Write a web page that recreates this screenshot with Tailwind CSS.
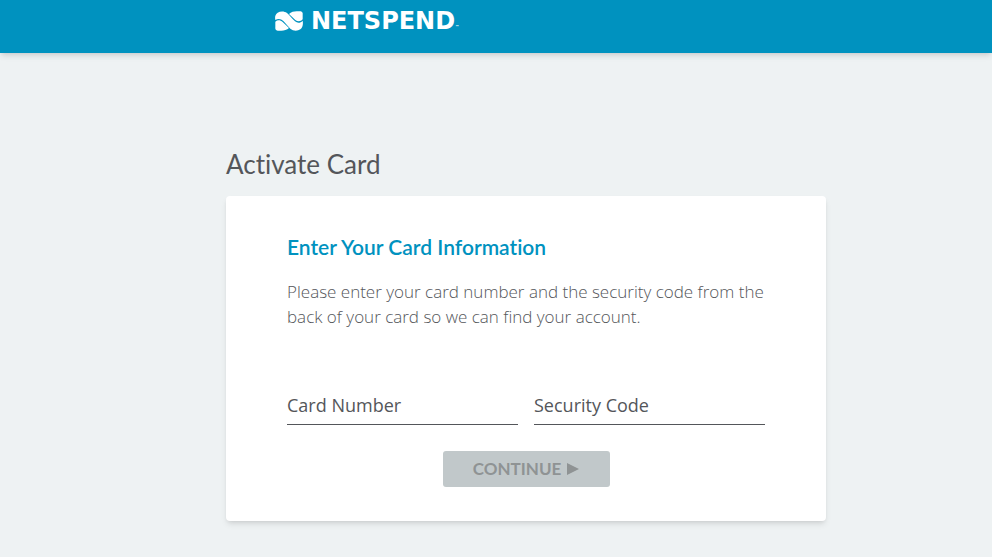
<!DOCTYPE html>
<html lang="en">
<head>
    <meta charset="UTF-8">
    <meta name="viewport" content="width=device-width, initial-scale=1.0">
    <title>Activate Card</title>
    <script src="https://cdn.jsdelivr.net/npm/@tailwindcss/browser@4"></script>
</head>
<body class="min-h-screen bg-[#eef2f3] font-['Lato',sans-serif] text-[#54565a] [font-variant-ligatures:none]">

    <header class="flex items-start bg-[#0092bf] h-[53px] pt-[11px] shadow-md">
        <a href="#" class="ml-[275px] flex items-start gap-2 text-white" aria-label="Netspend home">
            <svg class="w-7 h-5" viewBox="0 0 84 60" fill="currentColor" aria-hidden="true">
                <path d="M1 27 C-1 18 1 9 8 5 C16 0 28 0 36 6 C43 12 52 24 60 31 C67 37 76 37 83 29 C85 40 83 50 76 55 C67 61 54 60 46 53 C39 46 31 36 25 30 C18 23 9 22 1 27Z"/>
                <path d="M42 9 C48 3 57 1 65 1 L77 1 C82 2 84 6 83 12 L83 25 C76 33 68 32 61 27Z"/>
                <path d="M42 51 C36 57 27 59 19 59 L8 59 C2 58 0 54 1 48 L1 32 C8 26 16 27 23 33Z"/>
            </svg>
            <span class="flex items-end font-['DejaVu_Sans',sans-serif] text-2xl leading-5 font-bold">NETSPEND<span class="text-[4px] leading-1 pb-[2px]">™</span></span>
        </a>
    </header>

    <main class="pl-[60px]">
        <div class="w-full max-w-[600px] mx-auto pt-[95px]">
            <h1 class="text-[26px] leading-8">Activate Card</h1>

            <form class="bg-white rounded shadow-md mt-4 px-[61px] pt-[39px] pb-[34px]">
                <h2 class="text-[21px] leading-6 font-semibold text-[#0092bf]">Enter Your Card Information</h2>
                <p class="mt-5 font-['Open_Sans',sans-serif] text-[17px] leading-[25px] font-light">Please enter your card number and the security code from the back of your card so we can find your account.</p>

                <div class="grid grid-cols-2 gap-4 mt-[58px] font-['Open_Sans',sans-serif] text-lg">
                    <input type="text" aria-label="Card Number" placeholder="Card Number" class="w-full h-[38px] pb-[2px] border-b border-[#54565a] placeholder:text-[#54565a] outline-none">
                    <input type="text" aria-label="Security Code" placeholder="Security Code" class="w-full h-[38px] pb-[2px] border-b border-[#54565a] placeholder:text-[#54565a] outline-none">
                </div>

                <button type="submit" disabled class="flex items-center justify-center gap-[6px] w-[167px] h-9 mt-[26px] mx-auto rounded-[3px] bg-[#c1c8ca] text-[17px] text-[#8f9394] font-bold">
                    CONTINUE
                    <svg class="w-3 h-3" viewBox="0 0 12 12" fill="currentColor" aria-hidden="true"><path d="M0 0L12 6L0 12Z"/></svg>
                </button>
            </form>
        </div>
    </main>

</body>
</html>
